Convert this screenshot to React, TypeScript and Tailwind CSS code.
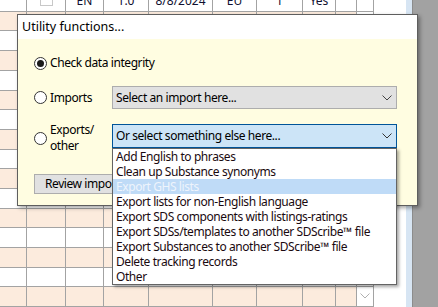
const font = { fontFamily: '"Segoe UI", "Noto Sans", "Open Sans", sans-serif' };

const cols = [
  { w: 'w-[27px]', text: '' },
  { w: 'w-[39px]', text: 'check' },
  { w: 'w-[38px]', text: 'EN' },
  { w: 'w-[45px]', text: '1.0' },
  { w: 'w-[64px]', text: '8/8/2024' },
  { w: 'w-[44px]', text: 'EU' },
  { w: 'w-[46px]', text: '1' },
  { w: 'w-[33px]', text: 'Yes' },
  { w: 'w-[21px]', text: '' },
];

const exportItems = [
  'Add English to phrases',
  'Clean up Substance synonyms',
  'Export GHS lists',
  'Export lists for non-English language',
  'Export SDS components with listings-ratings',
  'Export SDSs/templates to another SDScribe™ file',
  'Export Substances to another SDScribe™ file',
  'Delete tracking records',
  'Other',
];

const Chevron = ({ color = '#444' }: { color?: string }) => (
  <svg width="10" height="6" viewBox="0 0 10 6" fill="none">
    <path d="M0.5 0.5 L5 5 L9.5 0.5" stroke={color} strokeWidth="1" />
  </svg>
);

const Radio = ({ checked }: { checked?: boolean }) => (
  <div className="w-[13px] h-[13px] rounded-full border border-[#333] bg-white flex items-center justify-center shrink-0">
    {checked && <div className="w-[7px] h-[7px] rounded-full bg-[#1a1a1a]" />}
  </div>
);

const GridRow = ({ peach, last }: { peach: boolean; last?: boolean }) => (
  <div className="flex h-[20px] border-b border-[#a3a3a3]">
    {cols.map((c, i) => (
      <div
        key={i}
        className={`${c.w} h-full border-r border-[#a3a3a3] ${peach ? 'bg-[#fcebdd]' : 'bg-white'}`}
      />
    ))}
    <div className="w-[17px] h-full border-r border-[#a3a3a3] bg-white flex items-start justify-center pt-[6px]">
      {last && <Chevron color="#b0b0b0" />}
    </div>
  </div>
);

export default function App() {
  return (
    <div className="relative w-[438px] h-[307px] overflow-hidden bg-white text-[12px] text-black" style={font}>
      {/* background grid */}
      <div className="flex h-full">
        <div className="w-[374px] flex flex-col">
          <div className="flex h-[12px] border-b border-[#a3a3a3] bg-white">
            {cols.map((c, i) => (
              <div key={i} className={`${c.w} h-full border-r border-[#a3a3a3] flex justify-center overflow-hidden`}>
                {c.text === 'check' ? (
                  <div className="w-[13px] h-[13px] mt-[-7px] border border-[#c8c8c8] bg-white" />
                ) : (
                  <span className="mt-[-7px] leading-[16px] text-[#101030]">{c.text}</span>
                )}
              </div>
            ))}
            <div className="w-[17px] h-full border-r border-[#a3a3a3]" />
          </div>
          {Array.from({ length: 15 }).map((_, i) => (
            <GridRow key={i} peach={i % 2 === 0} last={i === 14} />
          ))}
        </div>
        <div className="w-[32px] bg-white" />
        <div className="w-[6px] bg-[#d7e5f3]" />
        <div className="flex-1 bg-[#a2a2a2] border-l border-[#8c8c8c]" />
      </div>

      {/* Utility functions dialog */}
      <div className="absolute left-[17px] top-[14px] w-[401px] h-[192px] border border-[#5e5e5e] shadow-[2px_2px_4px_rgba(0,0,0,0.35)] flex flex-col">
        <div className="h-[24px] bg-white pl-[4px] flex items-center text-[12.5px]">Utility functions...</div>
        <div className="flex-1 bg-[#fffde1] pl-[16px] pt-[12px] flex flex-col tracking-[-0.42px]">
          <div className="h-[24px] flex items-center gap-[3px]">
            <Radio checked />
            <span>Check data integrity</span>
          </div>

          <div className="mt-[11px] flex items-center">
            <div className="w-[78px] flex items-center gap-[3px]">
              <Radio />
              <span>Imports</span>
            </div>
            <div className="w-[285px] h-[23px] bg-[#e1e1e1] border border-[#adadad] pl-[3px] pr-[4px] flex items-center justify-between">
              <span>Select an import here...</span>
              <Chevron />
            </div>
          </div>

          <div className="mt-[13px] flex items-start">
            <div className="w-[78px] h-[32px] flex items-center gap-[3px]">
              <Radio />
              <div className="leading-[16px]">
                Exports/
                <br />
                other
              </div>
            </div>
            <div className="relative mt-[2px] w-[285px] z-10">
              <div className="h-[24px] bg-[#cce4f7] border border-[#005499] pl-[3px] pr-[4px] flex items-center justify-between">
                <span>Or select something else here...</span>
                <Chevron color="#333" />
              </div>
              <div className="absolute top-full left-0 w-full bg-white border border-[#646464] shadow-[2px_2px_3px_rgba(0,0,0,0.35)] flex flex-col">
                {exportItems.map((item, i) => (
                  <div
                    key={item}
                    className={`h-[15px] leading-[15px] pl-[3px] whitespace-nowrap ${
                      i === 2 ? 'bg-[#bfdbf7] text-[#eef4fc]' : 'text-[#1a0a10]'
                    }`}
                  >
                    {item}
                  </div>
                ))}
              </div>
            </div>
          </div>

          <div className="mt-[20px]">
            <div className="w-[120px] h-[20px] bg-[#e1e1e1] border border-[#adadad] pl-[10px] flex items-center">
              Review imports
            </div>
          </div>
        </div>
      </div>
    </div>
  );
}
